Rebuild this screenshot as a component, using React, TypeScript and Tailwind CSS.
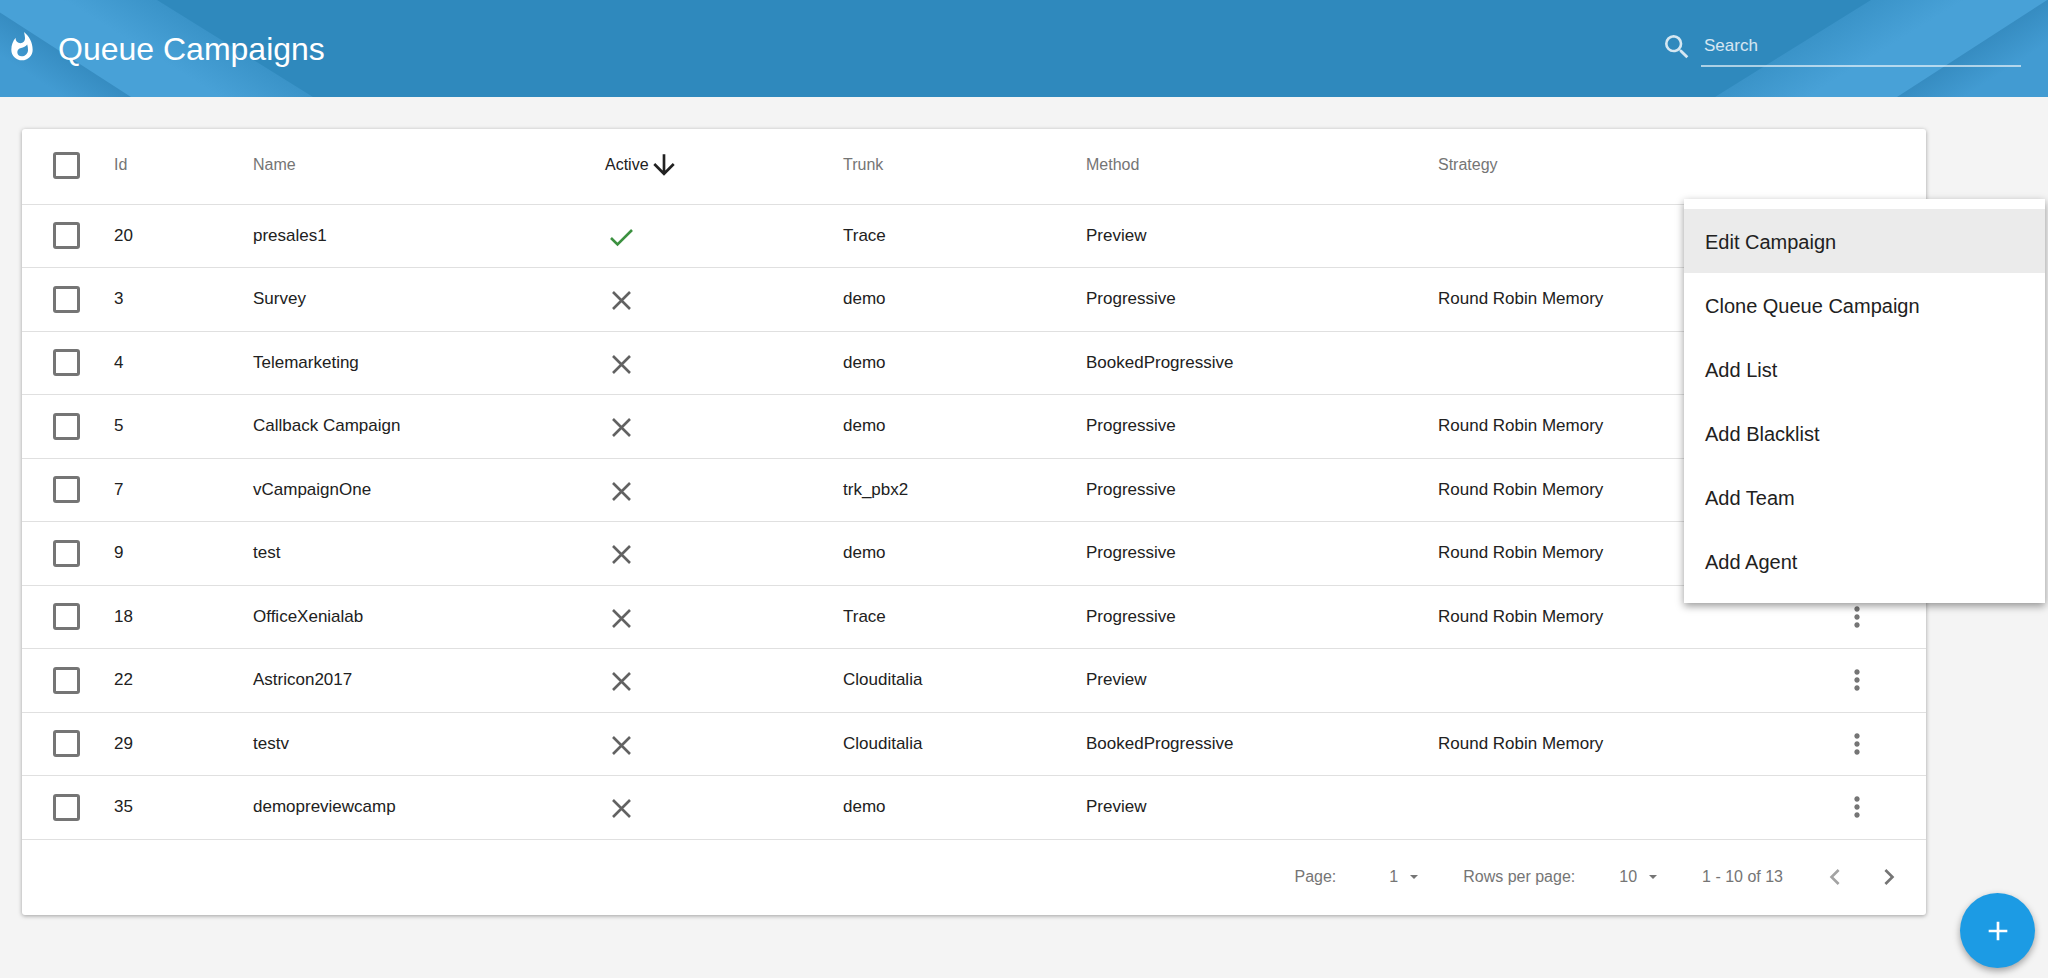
import React from "react";
import {
  MdAdd,
  MdArrowDownward,
  MdChevronLeft,
  MdChevronRight,
  MdMoreVert,
  MdSearch,
  MdWhatshot,
} from "react-icons/md";

interface Campaign {
  id: number;
  name: string;
  active: boolean;
  trunk: string;
  method: string;
  strategy?: string;
}

const ROUND_ROBIN = "Round Robin Memory";

const campaigns: Campaign[] = [
  { id: 20, name: "presales1", active: true, trunk: "Trace", method: "Preview" },
  { id: 3, name: "Survey", active: false, trunk: "demo", method: "Progressive", strategy: ROUND_ROBIN },
  { id: 4, name: "Telemarketing", active: false, trunk: "demo", method: "BookedProgressive" },
  { id: 5, name: "Callback Campaign", active: false, trunk: "demo", method: "Progressive", strategy: ROUND_ROBIN },
  { id: 7, name: "vCampaignOne", active: false, trunk: "trk_pbx2", method: "Progressive", strategy: ROUND_ROBIN },
  { id: 9, name: "test", active: false, trunk: "demo", method: "Progressive", strategy: ROUND_ROBIN },
  { id: 18, name: "OfficeXenialab", active: false, trunk: "Trace", method: "Progressive", strategy: ROUND_ROBIN },
  { id: 22, name: "Astricon2017", active: false, trunk: "Clouditalia", method: "Preview" },
  { id: 29, name: "testv", active: false, trunk: "Clouditalia", method: "BookedProgressive", strategy: ROUND_ROBIN },
  { id: 35, name: "demopreviewcamp", active: false, trunk: "demo", method: "Preview" },
];

const menuItems = [
  "Edit Campaign",
  "Clone Queue Campaign",
  "Add List",
  "Add Blacklist",
  "Add Team",
  "Add Agent",
];

interface RibbonsProps {
  id: string;
  /** How far the ribbons are pushed in from the corner */
  inset?: number;
  className: string;
}

/** Diagonal ribbons in a corner of the header; mirrored for the right side */
const Ribbons: React.FC<RibbonsProps> = ({ id, inset = 0, className }) => (
  <svg className={className} width="340" height="97" viewBox={`${-inset} 0 340 97`} aria-hidden="true">
    <defs>
      <linearGradient id={`${id}-band`} gradientUnits="userSpaceOnUse" x1="235" y1="48" x2="209" y2="90">
        <stop offset="0" stopColor="#3a93c8" />
        <stop offset="1" stopColor="#48a1d7" />
      </linearGradient>
      <linearGradient id={`${id}-corner`} gradientUnits="userSpaceOnUse" x1="65" y1="54" x2="45" y2="85">
        <stop offset="0" stopColor="#368cc1" />
        <stop offset="1" stopColor="#429bd2" />
      </linearGradient>
    </defs>
    <path d="M-30 0H157L313 97H-30Z" fill={`url(#${id}-band)`} />
    <path d="M-30 -7L131 97H-30Z" fill={`url(#${id}-corner)`} />
  </svg>
);

const CheckMark: React.FC = () => (
  <svg width="24" height="24" viewBox="0 0 24 24" fill="none" stroke="#3c9140" strokeWidth="2.6" role="img" aria-label="Active">
    <path d="M2 14L8.5 20.500L23 6" />
  </svg>
);

const Cross: React.FC = () => (
  <svg width="24" height="24" viewBox="0 0 24 24" fill="none" stroke="#626262" strokeWidth="2.6" role="img" aria-label="Inactive">
    <path d="M4 5L21 22M21 5L4 22" />
  </svg>
);

const Checkbox: React.FC<{ label: string }> = ({ label }) => (
  <input
    type="checkbox"
    aria-label={label}
    className="block size-[27px] appearance-none rounded-[3px] border-3 border-[#757575] bg-white checked:bg-[#757575]"
  />
);

const PageSelect: React.FC<{ id: string; value: string; options: string[] }> = ({ id, value, options }) => (
  <span className="flex items-center gap-3">
    <select id={id} defaultValue={value} className="field-sizing-content appearance-none bg-transparent">
      {options.map((option) => (
        <option key={option}>{option}</option>
      ))}
    </select>
    <svg width="8" height="4" viewBox="0 0 8 4" fill="currentColor" aria-hidden="true">
      <path d="M0 0H8L4 4Z" />
    </svg>
  </span>
);

const Header: React.FC = () => (
  <header className="relative flex h-[97px] items-center justify-between bg-[#2f89bd] text-white">
    <Ribbons id="left" className="absolute left-0 top-0" />
    <Ribbons id="right" inset={20} className="absolute right-0 top-0 -scale-x-100" />
    <div className="relative flex items-center gap-5 pl-1.5">
      <MdWhatshot className="mb-1 size-8" aria-hidden="true" />
      <h1 className="text-[32px] leading-10">Queue Campaigns</h1>
    </div>
    <div className="relative mb-1 mr-[27px] flex items-center gap-2 text-white/80">
      <label htmlFor="search">
        <MdSearch className="size-8" aria-label="Search" />
      </label>
      <input
        id="search"
        type="text"
        placeholder="Search"
        className="h-10 w-80 border-b-2 border-white/60 bg-transparent px-[3px] text-[17px] outline-none placeholder:text-white/80"
      />
    </div>
  </header>
);

const CampaignTable: React.FC = () => (
  <table className="w-full table-fixed border-collapse text-left text-[17px] leading-6 text-[#212121]">
    <colgroup>
      <col className="w-[92px]" />
      <col className="w-[139px]" />
      <col className="w-[352px]" />
      <col className="w-[238px]" />
      <col className="w-[243px]" />
      <col className="w-[352px]" />
      <col className="w-[403px]" />
      <col className="w-[85px]" />
    </colgroup>
    <thead>
      <tr className="h-[75px] border-b border-[#e0e0e0] text-base text-[#757575] [&>th]:pb-0.5 [&>th]:font-normal">
        <th className="pl-[31px]">
          <Checkbox label="Select all campaigns" />
        </th>
        <th>Id</th>
        <th>Name</th>
        <th className="text-[#212121]" aria-sort="descending">
          <button type="button" className="flex items-center">
            Active
            <MdArrowDownward className="-ml-px size-8" aria-hidden="true" />
          </button>
        </th>
        <th>Trunk</th>
        <th>Method</th>
        <th>Strategy</th>
        <th />
      </tr>
    </thead>
    <tbody>
      {campaigns.map((campaign) => (
        <tr key={campaign.id} className="border-b border-[#e0e0e0] odd:h-[63px] even:h-16">
          <td className="pl-[31px]">
            <Checkbox label={`Select ${campaign.name}`} />
          </td>
          <td>{campaign.id}</td>
          <td>{campaign.name}</td>
          <td className="pl-1">{campaign.active ? <CheckMark /> : <Cross />}</td>
          <td>{campaign.trunk}</td>
          <td>{campaign.method}</td>
          <td>{campaign.strategy}</td>
          <td>
            <button type="button" aria-label={`Options for ${campaign.name}`} className="block text-[#757575]">
              <MdMoreVert className="size-8" />
            </button>
          </td>
        </tr>
      ))}
    </tbody>
  </table>
);

const Pagination: React.FC = () => (
  <div className="flex h-[75px] items-center justify-end pr-[21px] text-base text-[#757575]">
    <label htmlFor="page" className="mr-[53px]">Page:</label>
    <PageSelect id="page" value="1" options={["1", "2"]} />
    <label htmlFor="rows" className="ml-[45px] mr-11">Rows per page:</label>
    <PageSelect id="rows" value="10" options={["10", "25", "50"]} />
    <span className="ml-[45px] mr-9">1 - 10 of 13</span>
    <button type="button" aria-label="Previous page" className="mr-[22px] text-[#a3a3a3]" disabled>
      <MdChevronLeft className="size-8" />
    </button>
    <button type="button" aria-label="Next page">
      <MdChevronRight className="size-8" />
    </button>
  </div>
);

/** Row action menu, floats above the table */
const ActionMenu: React.FC = () => (
  <div
    role="menu"
    className="absolute right-[3px] top-[199px] w-[361px] bg-white py-2.5 shadow-[0_3px_8px_rgba(0,0,0,0.4)]"
  >
    {menuItems.map((item) => (
      <button
        key={item}
        type="button"
        role="menuitem"
        className="block h-16 w-full px-[21px] pt-0.5 text-left text-xl text-[#212121] first:bg-[#ebebeb] hover:bg-[#ebebeb]"
      >
        {item}
      </button>
    ))}
  </div>
);

export default function App() {
  return (
    <div className="relative min-h-screen bg-[#f4f4f4] font-['Liberation_Sans',Arial,sans-serif]">
      <Header />
      <main className="pb-16 pl-[22px] pr-[122px] pt-8">
        <section className="rounded-[3px] bg-white shadow-[0_1px_4px_rgba(0,0,0,0.35)]">
          <CampaignTable />
          <Pagination />
        </section>
      </main>
      <ActionMenu />
      <button
        type="button"
        aria-label="Add campaign"
        className="fixed bottom-[10px] right-[13px] flex size-[75px] items-center justify-center rounded-full bg-[#1c9be4] text-white shadow-[0_3px_7px_rgba(0,0,0,0.35)]"
      >
        <MdAdd className="size-8" />
      </button>
    </div>
  );
}
